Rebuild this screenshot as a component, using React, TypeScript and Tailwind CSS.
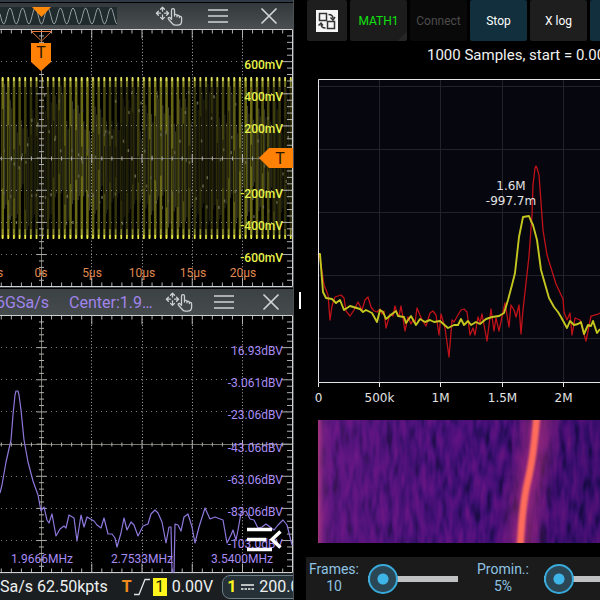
import { X } from "lucide-react";

const DIV_X = [41.5, 91.5, 142.5, 192.5, 242.5];

const FFT_TRACE =
  "0,493 2,485 6,462 11,440 13,415 15,395 16,391 18,391 19,395 21,410 24,440 28,462 33,481 38,495 41,511 44,507 47,520 49,523 52,514 56,536 60,529 64,526 66,528 69,515 74,518 77,541 81,515 84,527 87,517 94,521 97,525 101,528 104,518 108,534 112,534 115,538 117,547 121,533 124,518 127,530 131,522 134,525 138,536 143,526 148,524 151,514 155,510 158,513 162,522 166,543 169,527 171,527 172,572 174,572 175,524 178,525 181,531 184,517 188,514 192,527 195,543 199,527 205,508 210,519 215,517 223,520 227,543 231,535 233,530 236,540 238,530 241,513 246,511 250,519 254,520 258,528 262,527 266,524 270,527 274,530 278,525 283,520 287,525 292,545";

const YELLOW_TRACE =
  "318,254 320,254 323,292 326,298 332,299 336,303 340,300 344,310 350,306 360,309 363,312 366,310 372,313 377,322 380,310 383,312 386,319 392,314 396,311 398,316 404,317 406,323 411,316 416,325 420,319 425,322 430,320 434,322 440,321 448,328 454,325 458,325 461,319 464,325 468,321 471,325 476,322 480,324 486,319 492,317 499,316 504,313 508,300 512,285 515,273 519,237 523,217 529,216 531,221 533,225 537,240 541,270 549,298 554,307 558,312 561,317 567,328 570,321 574,325 578,324 581,322 584,334 588,325 591,326 593,321 597,333 600,329";

const RED_TRACE =
  "318,254 320,258 324,285 328,295 330,320 332,306 335,297 341,295 344,298 346,311 350,316 354,310 358,302 362,310 365,300 368,297 371,307 374,311 377,312 380,309 382,314 384,311 386,328 390,314 393,316 395,306 397,313 399,316 401,306 403,318 405,331 408,317 411,324 413,320 415,323 417,308 422,320 426,326 430,313 433,311 436,315 439,335 441,314 445,328 449,357 452,320 454,322 458,315 461,310 464,309 467,312 470,335 473,328 475,335 478,317 480,323 482,314 487,341 491,309 494,331 496,318 499,331 503,312 505,303 509,327 511,305 514,310 516,317 519,305 521,334 523,310 529,256 532,215 533,185 535,168 536,166 537,168 539,175 543,230 547,255 556,284 563,299 564,312 567,320 570,313 572,335 575,318 580,320 586,341 591,316 598,314 600,313";

function MoveHandIcon() {
  return (
    <svg
      width="28"
      height="20"
      viewBox="0 0 28 20"
      fill="none"
      stroke="#ccd0d1"
      strokeWidth="1.300"
      strokeLinecap="round"
      strokeLinejoin="round"
    >
      <path d="M7.500 1.500v3.500M7.500 9v4M1.500 7.200h4M9.500 7.200h4M5.500 3.200l2-2 2 2M5.500 11.400l2 2 2-2M3.400 5.200l-2 2 2 2M11.600 5.200l2 2-2 2" />
      <path d="M16.500 13.200V4.200a1.500 1.500 0 0 1 3 0v5.800M19.500 8.800c1-.8 2.400-.3 2.500 1v1M22 9.600c1-.7 2.300-.2 2.400 1v.9M24.400 10.600c1.100-.5 2.200.1 2.200 1.400v3c0 2.700-1.600 4.200-4.100 4.200h-1.800c-1.400 0-2.300-.5-3.200-1.500l-4-4.500c-.8-1-.1-2 1-1.800l2 1.800" />
    </svg>
  );
}

function MenuIcon() {
  return (
    <svg width="20" height="14" viewBox="0 0 20 14" stroke="#d0d3d4" strokeWidth="1.500">
      <path d="M0 1h20M0 7h20M0 13h20" />
    </svg>
  );
}

function WindowButtons({ gap }: { gap: string }) {
  return (
    <div className={`flex items-center ${gap}`}>
      <button aria-label="Move window">
        <MoveHandIcon />
      </button>
      <button aria-label="Menu" className="mr-[7px]">
        <MenuIcon />
      </button>
      <button aria-label="Close">
        <X size={28} strokeWidth={1.5} color="#d0d3d4" className="-mx-[5px]" />
      </button>
    </div>
  );
}

// Oscilloscope graticule: dotted divisions, centre axes and edge ticks
function Graticule({ top }: { top: number }) {
  const bottom = top + 257;
  const mid = top + 129;
  const rows = [32, 64, 96, 161, 193, 225].map((d) => top + d);
  const ticksX = Array.from({ length: 29 }, (_, i) => 1.3 + i * 10.05);
  const ticksY = Array.from({ length: 40 }, (_, i) => top + i * 6.43);
  return (
    <g stroke="#b0b0b0" fill="none">
      {DIV_X.slice(1).map((x) => (
        <path key={x} d={`M${x} ${top}V${bottom}`} strokeDasharray="1 2.2" />
      ))}
      {rows.map((y) => (
        <path key={y} d={`M1 ${y}H292`} strokeDasharray="1 4" opacity="0.7" />
      ))}
      <path d={`M41.5 ${top}V${bottom}M0 ${mid}H292`} stroke="#77776c" />
      {ticksX.map((x, i) => {
        const len = i % 5 === 4 ? 9 : 4;
        return (
          <path
            key={i}
            d={`M${x} ${top}v${len}M${x} ${bottom}v${-len}M${x} ${mid - len / 2}v${len}`}
          />
        );
      })}
      {ticksY.map((y, i) => {
        const len = i % 5 === 0 ? 10 : 5;
        return <path key={i} d={`M${41.5 - len / 2} ${y}h${len}M292 ${y}h${-len}`} />;
      })}
      <path d={`M0 ${top}H292.5V${bottom}H0`} stroke="#d0d0d0" />
    </g>
  );
}

// Aliased carrier: every cycle is a column whose brightness beats along x
function Carrier() {
  const noise = (n: number) => {
    const v = Math.sin(n * 127.1) * 43758.5453;
    return v - Math.floor(v);
  };
  const cycles = Array.from({ length: 52 }, (_, i) => i);
  return (
    <g>
      {cycles.map((i) => {
        const x = 1.4 + i * 5.65;
        const beat = 0.5 + 0.5 * Math.cos(((x - 80) / 83) * Math.PI * 2);
        const start = 84 + noise(i) * 50;
        const end = 232 - noise(i + 90) * 50;
        return (
          <g key={i}>
            <rect x={x} y="78" width="2.600" height="160" fill="#80801a" opacity={0.34 + beat * 0.5} />
            <rect x={x + 2.8} y={start} width="0.900" height={end - start} fill="#80805c" opacity={0.2 + beat * 0.4} />
            <rect x={x + 4.2} y={start + 8} width="0.900" height={end - start - 12} fill="#66662e" opacity={0.35 + beat * 0.25} />
            <rect x={x + 0.8} y={start + 25} width="1" height={Math.max(end - start - 45, 5)} fill="#080800" opacity="0.7" />
            <rect x={x + 0.4} y="78" width="1.600" height="9" fill="#b4b440" opacity="0.6" />
            <rect x={x + 0.4} y="77" width="1.600" height="4" fill="#e0e060" />
            <rect x={x + 0.4} y="229" width="1.600" height="7" fill="#b4b440" opacity="0.6" />
            <rect x={x + 0.4} y="235" width="1.600" height="4" fill="#e6e644" />
            <rect x={x + noise(i + 7) * 4} y={90 + noise(i + 3) * 140} width="1.500" height="3" fill="#66664a" />
            <rect x={x + noise(i + 17) * 4} y={90 + noise(i + 13) * 140} width="1.500" height="3" fill="#5a5a38" />
          </g>
        );
      })}
    </g>
  );
}

function ScopeHeader() {
  const wave = Array.from({ length: 118 }, (_, x) => {
    const y = 9 - 8 * Math.cos(((x - 10) / 12.6) * Math.PI * 2);
    return `${x},${y.toFixed(1)}`;
  }).join(" ");
  return (
    <div className="flex h-[26px] items-center justify-between bg-linear-to-b from-[#33393c] to-[#4a4e50] pr-[15px]">
      <svg width="117" height="18" viewBox="0 0 117 18">
        <rect width="117" height="18" fill="#202b2e" />
        <polyline points={wave} fill="none" stroke="#959ea0" />
        <path d="M32 0h19l-9.500 10z" fill="#ff8a0a" />
      </svg>
      <WindowButtons gap="gap-[25px]" />
    </div>
  );
}

function TimeChart() {
  const volts: [string, number][] = [
    ["600mV", 69],
    ["400mV", 101],
    ["200mV", 133],
    ["-200mV", 198],
    ["-400mV", 230],
    ["-600mV", 262],
  ];
  const times: [string, number][] = [
    ["s", 0],
    ["0s", 41],
    ["5µs", 92],
    ["10µs", 142],
    ["15µs", 193],
    ["20µs", 243],
  ];
  return (
    <svg className="block w-full" viewBox="0 29 293 258">
      <Carrier />
      <Graticule top={29.5} />
      <g className="text-xs font-medium" fill="#e9f24a" textAnchor="end">
        {volts.map(([label, y]) => (
          <text key={label} x="283" y={y}>
            {label}
          </text>
        ))}
      </g>
      <g className="text-xs" fill="#e08a50" textAnchor="middle">
        {times.map(([label, x]) => (
          <text key={label} x={x} y="277">
            {label}
          </text>
        ))}
      </g>
      <path d="M31.500 31.500h20l-10 9.500z" fill="none" stroke="#e8793a" />
      <path d="M31 43h20v19l-10 9-10-9z" fill="#ff8206" />
      <path d="M293 148v20h-24l-10-10 10-10z" fill="#ff8206" />
      <g className="text-base" fill="#2a1500" textAnchor="middle">
        <text x="41" y="58">T</text>
        <text x="280" y="164">T</text>
      </g>
    </svg>
  );
}

function FftHeader() {
  return (
    <div className="flex h-[26px] items-center justify-between bg-linear-to-b from-[#3c4144] to-[#454a4d] pr-[13px]">
      <div className="flex gap-5 pt-px text-base text-[#a084ec]">
        <span className="flex w-[49px] justify-end whitespace-nowrap">6GSa/s</span>
        <span>Center:1.9…</span>
      </div>
      <WindowButtons gap="gap-[21px]" />
    </div>
  );
}

function FftChart() {
  const levels: [string, number][] = [
    ["16.93dBV", 355],
    ["-3.061dBV", 387],
    ["-23.06dBV", 419],
    ["-43.06dBV", 452],
    ["-63.06dBV", 484],
    ["-83.06dBV", 516],
    ["-103.0dBV", 548],
  ];
  return (
    <div className="relative">
      <svg className="block w-full" viewBox="0 315 293 258">
        <Graticule top={315.5} />
        <polyline points={FFT_TRACE} fill="none" stroke="#8e78dc" strokeWidth="1.200" strokeLinejoin="round" />
        <g className="text-xs" fill="#a88cf4" textAnchor="end">
          {levels.map(([label, y]) => (
            <text key={label} x="283" y={y}>
              {label}
            </text>
          ))}
        </g>
        <g className="text-xs" fill="#a88cf4" textAnchor="middle">
          <text x="42" y="563">1.9666MHz</text>
          <text x="142" y="563">2.7533MHz</text>
          <text x="242" y="563">3.5400MHz</text>
        </g>
      </svg>
      <button aria-label="Expand menu" className="absolute right-[11px] bottom-[21px]">
        <svg width="35" height="25" viewBox="0 0 35 25" fill="none" stroke="#fff" strokeWidth="3.500">
          <path d="M0 2.500h25M0 12.500h19M0 22.500h25M33.500 4.500l-8.500 8 8.500 8" />
        </svg>
      </button>
    </div>
  );
}

function ScopeFooter() {
  return (
    <div className="flex h-[27px] items-center overflow-hidden border-t border-[#2c3134] bg-[#1b1e20] text-base whitespace-nowrap text-[#eef0f0]">
      <span className="shrink-0">Sa/s 62.50kpts</span>
      <span className="ml-3.5 shrink-0 font-bold text-[#f08a1c]">T</span>
      <svg className="ml-0.5 shrink-0" width="17" height="18" viewBox="0 0 17 18" fill="none" stroke="#dfe2e3" strokeWidth="1.300">
        <path d="M0 16.500h5l6-15h5" />
      </svg>
      <span className="ml-0.5 w-3.5 shrink-0 bg-[#fdf51c] text-center text-base leading-[18px] text-[#1c1c00]">1</span>
      <span className="ml-[5px] shrink-0">0.00V</span>
      <button className="ml-[9px] flex h-6 w-[110px] shrink-0 items-center gap-[5px] rounded-lg border border-[#6d7f88] bg-[#253037] pl-1">
        <span className="font-bold text-[#fdf51c]">1</span>
        <svg className="shrink-0" width="13" height="6" viewBox="0 0 13 6" stroke="#eef0f0" strokeWidth="1.500">
          <path d="M0 1h13" />
          <path d="M0 5h13" strokeDasharray="2.500 1" />
        </svg>
        <span>200.0mV</span>
      </button>
    </div>
  );
}

function Toolbar() {
  const button = "h-[41px] shrink-0 rounded-xs text-xs";
  return (
    <div className="flex gap-[3px] overflow-hidden pl-px whitespace-nowrap">
      <button aria-label="Swap views" className={`${button} flex w-10 items-center justify-center bg-[#1e1e1e]`}>
        <svg width="22" height="22" viewBox="0 0 22 22" fill="none" stroke="#333" strokeWidth="1.500">
          <rect width="22" height="22" fill="#f6f6f6" stroke="none" />
          <path d="M3.500 3.500h7v7h-7zM11.500 11.500h7v7h-7z" />
          <path d="M12.500 4.500c3 0 4.500 1.500 4.500 4M9.500 18c-3 0-4.500-1.500-4.500-4" />
          <path d="M14.500 7.500l2.500 2.500 2-3M2.500 15.500l2.500-2.500 2 2.500" />
        </svg>
      </button>
      <button className={`${button} w-[57px] bg-linear-135 from-[#1c1c1c] from-90% to-[#262626] to-90% text-[#12e010]`}>
        MATH1
      </button>
      <button disabled className={`${button} w-[57px] bg-[#090909] text-[#4c4c4c]`}>
        Connect
      </button>
      <button className={`${button} w-[57px] bg-[#112f3c] text-white`}>Stop</button>
      <button className={`${button} w-[57px] bg-[#1e1e1e] text-white`}>X log</button>
      <button aria-label="Y log" className={`${button} w-[57px] bg-[#112f3c]`} />
    </div>
  );
}

function SpectrumChart() {
  const ticks: [string, number][] = [
    ["0", 318.5],
    ["500k", 379.5],
    ["1M", 440.5],
    ["1.5M", 502.5],
    ["2M", 563.5],
  ];
  return (
    <svg className="block w-full" viewBox="306 70 294 340">
      <rect x="318" y="79" width="282" height="303" fill="#06060f" />
      <g stroke="#22222a">
        {[86.5, 149.5, 212.5, 275.5, 338.5].map((y) => (
          <path key={y} d={`M319 ${y}H600`} />
        ))}
        {ticks.slice(1).map(([label, x]) => (
          <path key={label} d={`M${x} 80V382`} />
        ))}
      </g>
      <polyline points={RED_TRACE} fill="none" stroke="#c01218" strokeWidth="1.300" strokeLinejoin="round" />
      <polyline points={YELLOW_TRACE} fill="none" stroke="#c4c720" strokeWidth="1.900" strokeLinejoin="round" />
      <path d="M600 79.500H318.500V382.500H600" fill="none" stroke="#e6e6e6" />
      <g className="font-['DejaVu_Sans'] text-xs" fill="#e2e2e2" textAnchor="middle">
        <text x="511" y="190">1.6M</text>
        <text x="511" y="205">-997.7m</text>
        {ticks.map(([label, x]) => (
          <g key={label}>
            <path d={`M${x} 383v4`} stroke="#e6e6e6" />
            <text x={x} y="402">
              {label}
            </text>
          </g>
        ))}
      </g>
    </svg>
  );
}

function Spectrogram() {
  return (
    <svg className="block w-full" viewBox="306 410 294 147">
      <defs>
        {/* stretched noise mapped onto the dark half of a magma palette */}
        <filter id="magma" x="0" y="0" width="1" height="1" colorInterpolationFilters="sRGB">
          <feTurbulence type="fractalNoise" baseFrequency="0.150 0.040" numOctaves="2" seed="8" />
          <feColorMatrix values="1.200 0 0 0 -0.060  1.200 0 0 0 -0.060  1.200 0 0 0 -0.060  0 0 0 0 1" />
          <feComponentTransfer>
            <feFuncR type="table" tableValues="0.04 0.09 0.20 0.29 0.36 0.42" />
            <feFuncG type="table" tableValues="0.03 0.04 0.05 0.06 0.07 0.09" />
            <feFuncB type="table" tableValues="0.18 0.27 0.42 0.48 0.50 0.50" />
          </feComponentTransfer>
        </filter>
        <filter id="glow" x="-2" width="5">
          <feGaussianBlur stdDeviation="9 2" />
        </filter>
        <filter id="soft" x="-1" width="3">
          <feGaussianBlur stdDeviation="1.200" />
        </filter>
        <linearGradient id="low">
          <stop offset="0" stopColor="#b23a80" stopOpacity="0.9" />
          <stop offset="0.02" stopColor="#8a2a84" stopOpacity="0.55" />
          <stop offset="0.05" stopColor="#7a2088" stopOpacity="0.4" />
          <stop offset="0.5" stopColor="#6a1c88" stopOpacity="0.100" />
          <stop offset="1" stopColor="#1c0a48" stopOpacity="0.200" />
        </linearGradient>
        <clipPath id="frame">
          <rect x="318" y="420" width="282" height="123" />
        </clipPath>
      </defs>
      <g clipPath="url(#frame)">
        <rect x="318" y="420" width="282" height="123" filter="url(#magma)" />
        <rect x="318" y="420" width="282" height="123" fill="url(#low)" />
        <path d="M540 410Q535 460 530 480T522 552" fill="none" stroke="#a82f7c" strokeWidth="22" opacity="0.85" filter="url(#glow)" />
        <path d="M537 412Q534 455 528 480T520 552" fill="none" stroke="#ff6c5c" strokeWidth="7" filter="url(#soft)" />
      </g>
    </svg>
  );
}

function Knob({ id, label, value, labelWidth }: { id: string; label: string; value: string; labelWidth: string }) {
  return (
    <div className="flex shrink-0 items-start">
      <label htmlFor={id} className={`${labelWidth} text-center text-sm leading-[17px] text-[#8fc3e4]`}>
        {label}
        <br />
        {value}
      </label>
      <input
        id={id}
        type="range"
        defaultValue={0}
        className="ml-1.5 mt-[3px] h-[30px] w-[90px] appearance-none bg-transparent [&::-webkit-slider-runnable-track]:h-1.5 [&::-webkit-slider-runnable-track]:bg-[#bfc1c2] [&::-webkit-slider-thumb]:-mt-3 [&::-webkit-slider-thumb]:size-[30px] [&::-webkit-slider-thumb]:appearance-none [&::-webkit-slider-thumb]:rounded-full [&::-webkit-slider-thumb]:border-2 [&::-webkit-slider-thumb]:border-[#38aadb] [&::-webkit-slider-thumb]:bg-[radial-gradient(circle,#3db5e8_5px,#2b4654_6px)]"
      />
    </div>
  );
}

export default function App() {
  return (
    <main className="grid min-h-screen grid-cols-[49fr_2fr_49fr] overflow-hidden bg-black font-[Roboto,sans-serif]">
      <section className="min-w-0 overflow-hidden border-r border-[#4a5054]">
        <div className="h-[3px] border-b border-black bg-[#2f3a44]" />
        <ScopeHeader />
        <TimeChart />
        <div className="h-0.5 border-b border-black bg-[#3a3f44]" />
        <FftHeader />
        <FftChart />
        <ScopeFooter />
      </section>

      {/* Splitter */}
      <div className="flex items-center justify-center">
        <div className="h-[17px] w-0.5 bg-white" />
      </div>

      <section className="flex min-w-0 flex-col overflow-hidden">
        <Toolbar />
        <h1 className="h-[29px] pt-1 pl-[121px] text-[15px] leading-5 whitespace-nowrap text-[#f0f0f0]">
          1000 Samples, start = 0.000 s
        </h1>
        <SpectrumChart />
        <Spectrogram />
        <div className="flex flex-1 gap-2.5 overflow-hidden bg-[#1b1b1b] pt-1">
          <Knob id="frames" label="Frames:" value="10" labelWidth="w-14" />
          <Knob id="prominence" label="Promin.:" value="5%" labelWidth="w-[70px]" />
        </div>
      </section>
    </main>
  );
}
